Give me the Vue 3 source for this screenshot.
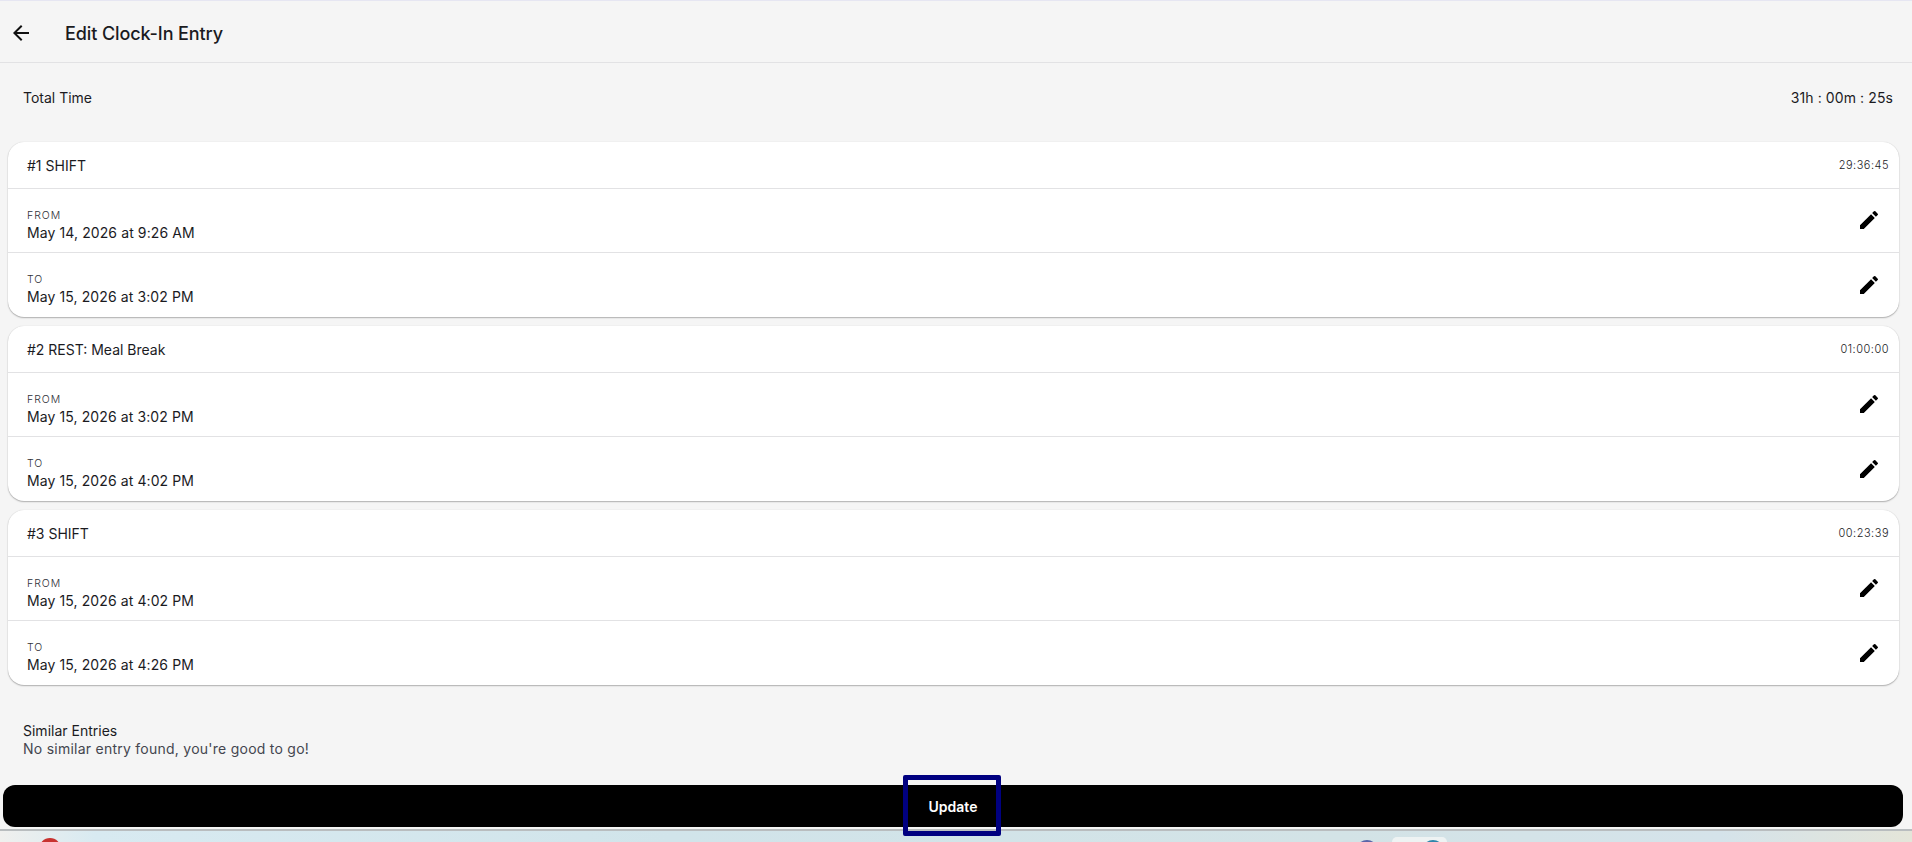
<script setup>
const cards = [
  { title: '#1 SHIFT', time: '29:36:45', from: 'May 14, 2026 at 9:26 AM', to: 'May 15, 2026 at 3:02 PM' },
  { title: '#2 REST: Meal Break', time: '01:00:00', from: 'May 15, 2026 at 3:02 PM', to: 'May 15, 2026 at 4:02 PM' },
  { title: '#3 SHIFT', time: '00:23:39', from: 'May 15, 2026 at 4:02 PM', to: 'May 15, 2026 at 4:26 PM' },
]
</script>

<template>
  <div class="page">
    <div class="app">
      <header class="topbar">
        <svg class="back" viewBox="0 0 24 24" width="24" height="24"><path d="M20 11H7.83l5.59-5.59L12 4l-8 8 8 8 1.41-1.41L7.83 13H20v-2z" /></svg>
        <h1>Edit Clock-In Entry</h1>
      </header>
      <div class="total">
        <span>Total Time</span>
        <span class="total-value">31h : 00m : 25s</span>
      </div>
      <div class="cards">
        <section v-for="c in cards" :key="c.title" class="card">
          <div class="card-head">
            <span class="title">{{ c.title }}</span>
            <span class="time">{{ c.time }}</span>
          </div>
          <div class="row">
            <div class="col">
              <span class="label">FROM</span>
              <span class="value">{{ c.from }}</span>
            </div>
            <svg class="edit" viewBox="0 0 24 24" width="24" height="24"><path d="M3 17.25V21h3.75L17.81 9.94l-3.75-3.75L3 17.25zM20.71 7.04a1 1 0 0 0 0-1.41l-2.34-2.34a1 1 0 0 0-1.41 0l-1.83 1.83 3.75 3.75 1.83-1.83z" /></svg>
          </div>
          <div class="row">
            <div class="col">
              <span class="label">TO</span>
              <span class="value">{{ c.to }}</span>
            </div>
            <svg class="edit" viewBox="0 0 24 24" width="24" height="24"><path d="M3 17.25V21h3.75L17.81 9.94l-3.75-3.75L3 17.25zM20.71 7.04a1 1 0 0 0 0-1.41l-2.34-2.34a1 1 0 0 0-1.41 0l-1.83 1.83 3.75 3.75 1.83-1.83z" /></svg>
          </div>
        </section>
      </div>
      <div class="similar">
        <div class="similar-title">Similar Entries</div>
        <div class="similar-text">No similar entry found, you're good to go!</div>
      </div>
      <div class="action">
        <button class="update"><span class="update-label">Update</span></button>
      </div>
    </div>
    <div class="wallpaper">
      <span class="dot red"></span>
      <span class="dot blue"></span>
      <span class="tab"><span class="dot teal"></span></span>
    </div>
  </div>
</template>

<style scoped>
.page {
  width: 1912px;
  height: 842px;
  overflow: hidden;
  display: flex;
  flex-direction: column;
  font-family: Inter, "Liberation Sans", sans-serif;
  color: #1b1b1f;
}
.app {
  height: 831px;
  flex: none;
  box-sizing: border-box;
  background: #f5f5f5;
  border-top: 1px solid #e6e6f2;
  border-bottom: 2px solid #b9bdbf;
  display: flex;
  flex-direction: column;
  position: relative;
  z-index: 1;
}
.topbar {
  height: 62px;
  flex: none;
  box-sizing: border-box;
  border-bottom: 1px solid #e2e2e4;
  display: flex;
  align-items: center;
  padding: 3px 0 0 9px;
}
.back { fill: #111; }
.topbar h1 {
  margin: 0 0 0 32px;
  font-size: 18px;
  font-weight: 500;
  letter-spacing: -0.1px;
  color: #1b1b1f;
}
.total {
  height: 79px;
  flex: none;
  box-sizing: border-box;
  display: flex;
  justify-content: space-between;
  padding: 25px 19px 0 23px;
  font-size: 14px;
  line-height: 20px;
}
.total-value { letter-spacing: 0.1px; }
.cards {
  display: flex;
  flex-direction: column;
  gap: 9px;
  padding: 0 13px 0 8px;
}
.card {
  height: 175px;
  box-sizing: border-box;
  background: #fff;
  border-radius: 16px;
  box-shadow: 0 1px 1.5px rgba(0, 0, 0, 0.28), 0 0 1px rgba(0, 0, 0, 0.18);
  overflow: hidden;
}
.card-head {
  height: 47px;
  box-sizing: border-box;
  display: flex;
  align-items: center;
  justify-content: space-between;
  padding: 0 10px 0 19px;
  border-bottom: 1px solid #e2e2e4;
}
.title { font-size: 14px; font-weight: 400; }
.time { font-size: 11px; font-weight: 300; letter-spacing: 0.5px; color: #1b1b1f; }
.row {
  height: 64px;
  box-sizing: border-box;
  display: flex;
  align-items: center;
  justify-content: space-between;
  padding: 0 18px 2px 19px;
  border-bottom: 1px solid #e2e2e4;
}
.row:first-of-type { padding-bottom: 0; }
.row:last-child { border-bottom: 0; }
.col { display: flex; flex-direction: column; padding-top: 12px; }
.label { font-size: 10.5px; font-weight: 300; line-height: 14px; letter-spacing: 1px; color: #2f3138; }
.value { font-size: 14px; line-height: 20px; letter-spacing: 0.1px; }
.edit { fill: #000; margin-top: 1px; }
.similar {
  padding: 37px 23px 0;
  font-size: 14px;
  line-height: 18px;
}
.similar-title { font-weight: 400; }
.similar-text { letter-spacing: 0.25px; color: #44464f; }
.action {
  position: relative;
  padding: 0 9px 0 3px;
  margin-top: 27px;
}
.update {
  display: block;
  width: 100%;
  height: 42px;
  border: 0;
  border-radius: 12px;
  background: #000;
  color: #fff;
  font: 600 14px Inter, "Liberation Sans", sans-serif;
  padding: 0;
  position: relative;
}
.update-label { position: relative; z-index: 1; }
.update::after {
  content: "";
  position: absolute;
  left: 900px;
  top: -10px;
  width: 98px;
  height: 61px;
  box-sizing: border-box;
  border: 5px solid #000080;
  border-radius: 2px;
}
.wallpaper {
  flex: 1;
  position: relative;
  background: linear-gradient(90deg, #f0f0ee 0, #d8eaf1 5%, #d1e4ea 35%, #d3e3e6 70%, #d5e3ea 90%, #e4e5d9 100%);
}
.dot { position: absolute; border-radius: 50%; width: 22px; height: 22px; }
.red { left: 39px; top: 7px; background: #c8322f; }
.blue { left: 1356px; top: 9px; background: #5a64a8; }
.tab {
  position: absolute;
  left: 1392px;
  top: 6px;
  width: 55px;
  height: 20px;
  background: #eef3f3;
  border-radius: 5px;
}
.teal { left: 30px; top: 3px; background: #2e86ab; }
</style>

<style>
html, body { margin: 0; padding: 0; }
</style>
